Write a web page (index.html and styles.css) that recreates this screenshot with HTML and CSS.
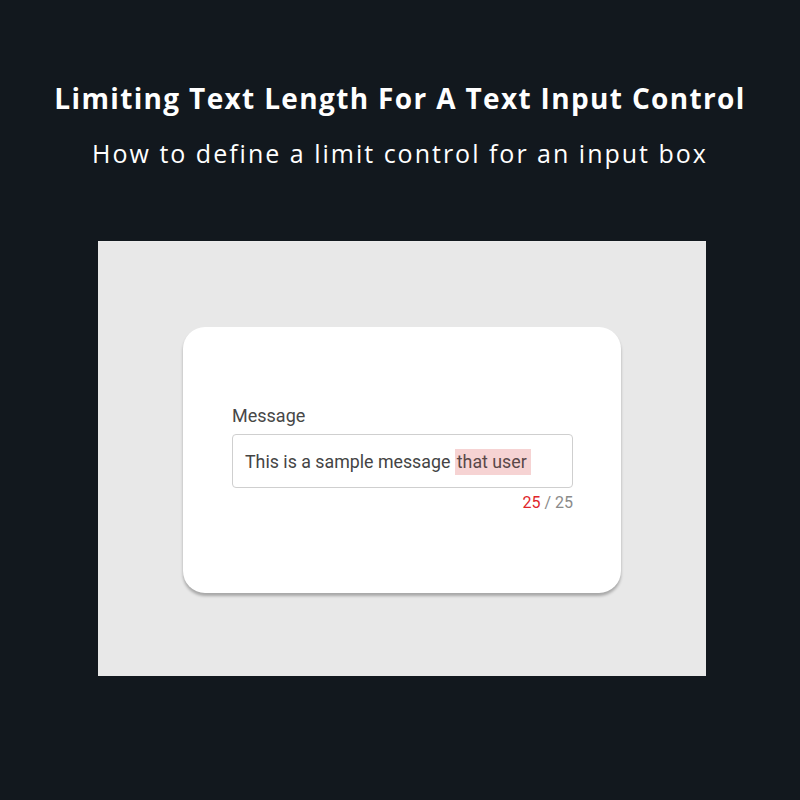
FILE: index.html
```html
<!DOCTYPE html>
<html lang="en">
<head>
<meta charset="utf-8">
<title>Limiting Text Length For A Text Input Control</title>
<link rel="stylesheet" href="styles.css">
</head>
<body>
<main class="page">
  <header class="intro">
    <h1 class="title">Limiting Text Length For A Text Input Control</h1>
    <p class="subtitle">How to define a limit control for an input box</p>
  </header>
  <section class="stage">
    <div class="card">
      <div class="field">
        <label class="field-label">Message</label>
        <div class="field-box">
          <span class="field-text">This is a sample message <mark class="overflow">that user</mark></span>
        </div>
        <div class="counter"><span class="count-now">25</span> / 25</div>
      </div>
    </div>
  </section>
</main>
</body>
</html>
```

FILE: styles.css
```css
html, body {
  margin: 0;
  padding: 0;
}

body {
  background: #12181e;
  width: 800px;
  height: 800px;
  overflow: hidden;
}

.page {
  display: flex;
  flex-direction: column;
  align-items: center;
}

.intro {
  text-align: center;
  color: #ffffff;
  font-family: "Open Sans", "DejaVu Sans", sans-serif;
  padding-top: 79px;
}

.title {
  margin: 0;
  font-size: 28px;
  font-weight: 700;
  line-height: 38px;
  letter-spacing: 1.35px;
}

.subtitle {
  margin: 20px 0 0;
  font-size: 25px;
  font-weight: 400;
  line-height: 32px;
  letter-spacing: 2px;
}

.stage {
  margin-top: 72px;
  margin-left: 4px;
  width: 608px;
  height: 435px;
  background: #e8e8e8;
  border-top: 1px solid #ececec;
  display: flex;
  justify-content: center;
  padding-top: 85px;
  box-sizing: border-box;
}

.card {
  width: 438px;
  height: 266px;
  background: #ffffff;
  border-radius: 22px;
  box-shadow: 0 3px 3px rgba(0, 0, 0, 0.28);
  box-sizing: border-box;
  padding: 77px 48px 0 49px;
  font-family: Roboto, "Liberation Sans", sans-serif;
}

.field {
  display: flex;
  flex-direction: column;
}

.field-label {
  font-size: 18px;
  color: #474747;
  line-height: 23px;
}

.field-box {
  margin-top: 7px;
  height: 54px;
  border: 1px solid #cfcfcf;
  border-radius: 4px;
  box-sizing: border-box;
  display: flex;
  align-items: center;
  padding-left: 12px;
}

.field-text {
  font-size: 17.8px;
  color: #444444;
  white-space: nowrap;
}

.overflow {
  background: #f6d3d3;
  color: #5a4848;
  padding: 2px 4px 3px 2px;
}

.counter {
  margin-top: 5px;
  align-self: flex-end;
  font-size: 16px;
  color: #8a8a8a;
  line-height: 19px;
}

.count-now {
  color: #e0262b;
}
```
